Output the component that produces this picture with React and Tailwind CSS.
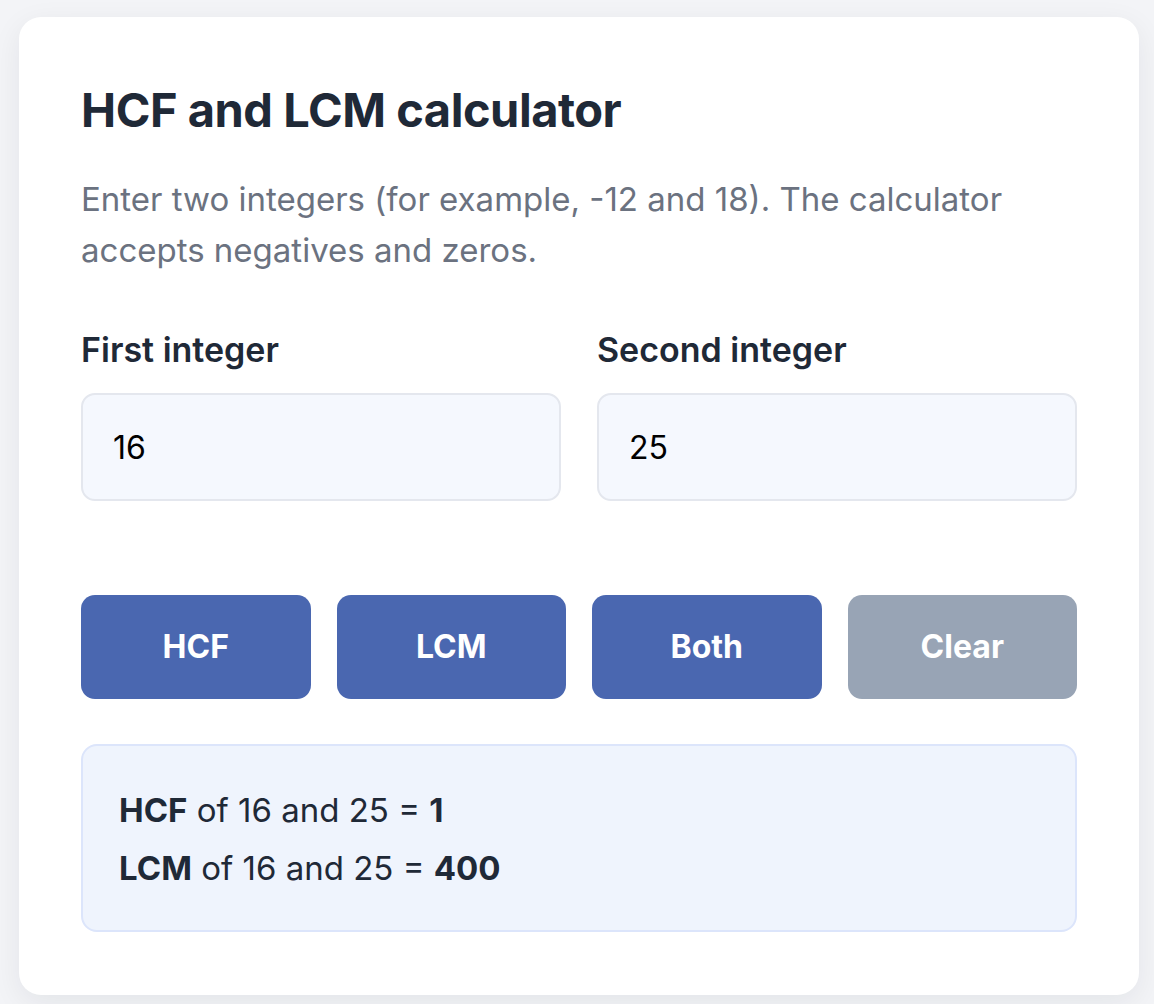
import { useState } from "react";

function gcd(a, b) {
  a = Math.abs(a); b = Math.abs(b);
  while (b) [a, b] = [b, a % b];
  return a;
}

export default function App() {
  const [a, setA] = useState("16");
  const [b, setB] = useState("25");
  const x = parseInt(a, 10), y = parseInt(b, 10);
  const hcf = gcd(x, y);
  const lcm = hcf === 0 ? 0 : Math.abs(x * y) / hcf;

  return (
    <main className="min-h-screen bg-[#f3f4f7] pt-[17px] pb-[10px] pl-[19px] font-['Inter','Liberation_Sans',sans-serif]">
      <section className="w-[1120px] rounded-[22px] bg-white px-[62px] pt-[64px] pb-[63px] shadow-[0_8px_30px_rgba(15,23,42,0.07)]">
        <h1 className="text-[47px] font-bold leading-[57px] tracking-[-0.01em] text-[#1f2937]">HCF and LCM calculator</h1>
        <p className="mt-[36px] text-[33px] leading-[51px] text-[#6b7280]">
          Enter two integers (for example, -12 and 18). The calculator accepts negatives and zeros.
        </p>
        <div className="mt-[54px] grid grid-cols-2 gap-[36px]">
          {[["First integer", a, setA], ["Second integer", b, setB]].map(([label, value, set]) => (
            <label className="block" key={label}>
              <span className="block text-[34px] font-semibold leading-[40px] text-[#1f2937]">{label}</span>
              <input
                className="mt-[23px] h-[108px] w-full rounded-[14px] border-2 border-[#e4e7ee] bg-[#f5f8fe] px-[30px] text-[32px] text-black outline-none"
                onChange={(e) => set(e.target.value)}
                value={value}
              />
            </label>
          ))}
        </div>
        <div className="mt-[94px] grid grid-cols-4 gap-[26px]">
          {["HCF", "LCM", "Both"].map((t) => (
            <button className="h-[104px] rounded-[14px] bg-[#4a67b0] text-[32px] font-bold text-white" key={t}>{t}</button>
          ))}
          <button className="h-[104px] rounded-[14px] bg-[#98a4b5] text-[32px] font-bold text-white">Clear</button>
        </div>
        <div className="mt-[45px] rounded-[16px] border-2 border-[#dce5fb] bg-[#eff4fd] px-[36px] pt-[35px] pb-[33px] text-[33px] leading-[58px] text-[#1f2937]">
          <p><b>HCF</b> of {a} and {b} = <b>{hcf}</b></p>
          <p><b>LCM</b> of {a} and {b} = <b>{lcm}</b></p>
        </div>
      </section>
    </main>
  );
}
